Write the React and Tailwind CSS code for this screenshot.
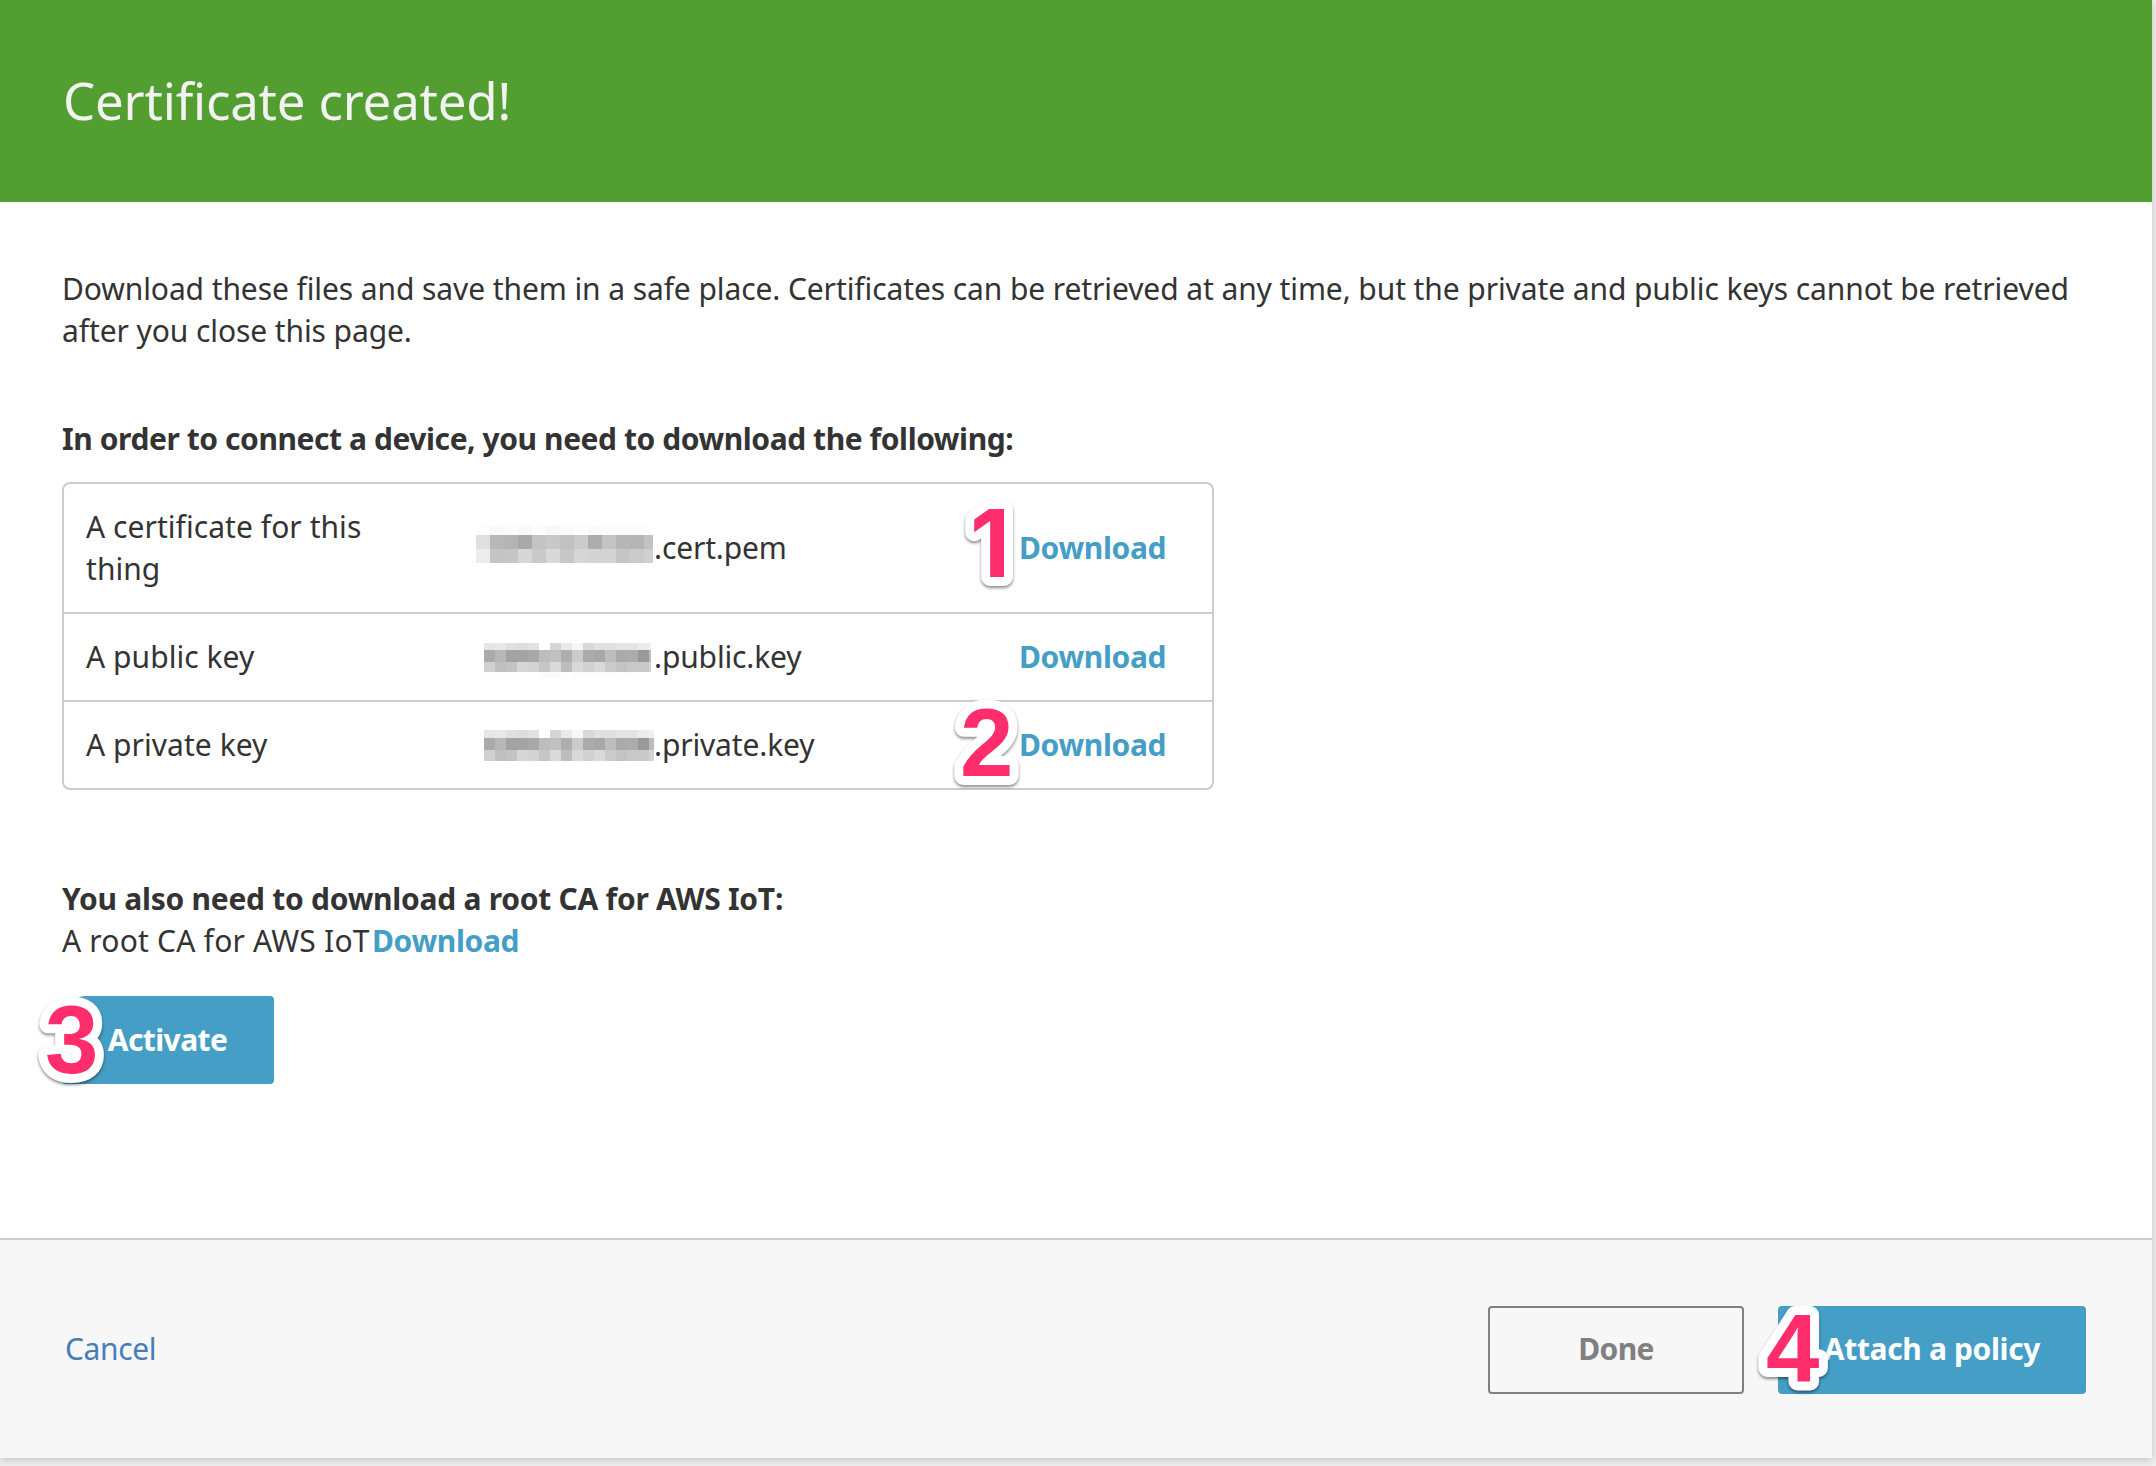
import React from "react";

const FACE = "font-['Noto_Sans',sans-serif]";

function Mosaic({ rows, cell, className }) {
  return (
    <span className={`block shrink-0 overflow-hidden ${className}`}>
      {rows.map(([height, shades], i) => (
        <span key={i} className="flex" style={{ height }}>
          {shades.split(" ").map((s, j) => (
            <span key={j} className="block shrink-0" style={{ width: cell, backgroundColor: `#${s}${s}${s}` }} />
          ))}
        </span>
      ))}
    </span>
  );
}

const certRows = [
  [10, "fd f9 fc f9 fd f8 fb fd fa fb fb fc fe"],
  [14, "e0 b8 b4 a9 c4 c8 c1 cb ad c3 b7 b5 c3"],
  [14, "ec c4 c6 d6 ca d9 c7 d6 d3 d3 c5 cb d0"],
];

const keyShades = [
  "e6 e8 e0 dd e1 ff d5 e9 f6 d8 e0 e0 e5 e4 ec f0",
  "aa b7 a2 a4 a8 bd c1 ae cb ab a7 bd aa ac 99 bd",
  "d0 bf c3 d6 d3 c7 da bd d9 d1 d9 cb c3 c8 ca d3",
  "fd fd fd ff ff fc fa ff fc fc fc fc fd fc ff ff",
];
const publicRows = [[7, keyShades[0]], [12, keyShades[1]], [10, keyShades[2]], [7, keyShades[3]]];
const privateRows = [[8, keyShades[0]], [12, keyShades[1]], [11, keyShades[2]]];

function Marker({ digit, className, family = "Liberation Sans", size = 96 }) {
  return (
    <svg
      className={`pointer-events-none absolute h-[110px] w-[90px] overflow-visible [filter:drop-shadow(0_2px_1.5px_rgba(0,0,0,0.45))] ${className}`}
      viewBox="0 0 90 110"
    >
      <text
        x="20"
        y="89"
        fontFamily={`${family}, sans-serif`}
        fontWeight="700"
        fontSize={size}
        fill="#ff2d6c"
        stroke="#fff"
        strokeWidth="18"
        strokeLinejoin="round"
        paintOrder="stroke"
      >
        {digit}
      </text>
    </svg>
  );
}

function DownloadLink() {
  return <a className="font-bold tracking-[-0.35px] text-[#459ec5]">Download</a>;
}

function Row({ label, mosaic, ext, last, children }) {
  return (
    <div className={`relative flex items-center py-[22px] ${last ? "" : "border-b-2 border-[#ccc]"}`}>
      <div className="w-[412px] pr-[110px] pl-[22px] tracking-[0.05px]">{label}</div>
      <div className="flex w-[543px] items-center">
        <div className="flex h-[42px] w-[178px] shrink-0">{mosaic}</div>
        <span className="tracking-[-0.15px]">{ext}</span>
      </div>
      <DownloadLink />
      {children}
    </div>
  );
}

export default function App() {
  return (
    <div className={`h-[1466px] w-[2156px] overflow-hidden bg-[#f0f0f0] ${FACE} text-[30px] leading-[42px] text-[#333]`}>
      <div className="flex h-[1458px] w-[2152px] flex-col bg-white shadow-[0_2px_8px_rgba(0,0,0,0.2)]">
        <header className="flex h-[202px] items-center bg-[#529e30] pb-0.5 pl-[63px]">
          <h1 className="text-[51px] leading-[70px] tracking-[-0.2px] text-[#f2f2f2]">Certificate created!</h1>
        </header>

        <main className="h-[1036px] px-[62px] pt-[66px]">
          <p className="tracking-[-0.095px] whitespace-nowrap">
            Download these files and save them in a safe place. Certificates can be retrieved at any time, but the private and public keys cannot be retrieved
            <br />
            after you close this page.
          </p>

          <h2 className="mt-[66px] font-bold tracking-[-0.43px]">In order to connect a device, you need to download the following:</h2>
          <div className="mt-[22px] w-[1152px] rounded-lg border-2 border-[#ccc]">
            <Row
              label="A certificate for this thing"
              ext=".cert.pem"
              mosaic={<Mosaic rows={certRows} cell={14} className="-mt-[2px] w-[177px]" />}
            >
              <Marker digit="1" className="top-[4px] left-[886px]" family="Inter" size={93} />
            </Row>
            <Row
              label="A public key"
              ext=".public.key"
              mosaic={<Mosaic rows={publicRows} cell={11} className="mt-[7px] ml-2 w-[167px]" />}
            />
            <Row
              label="A private key"
              ext=".private.key"
              last
              mosaic={<Mosaic rows={privateRows} cell={11} className="mt-[6px] ml-2 w-[170px]" />}
            >
              <Marker digit="2" className="-top-[15px] left-[876px]" />
            </Row>
          </div>

          <h2 className="mt-[88px] font-bold tracking-[-0.26px]">You also need to download a root CA for AWS IoT:</h2>
          <p className="flex">
            <span className="w-[310px] tracking-[0.2px] whitespace-nowrap">A root CA for AWS IoT</span>
            <DownloadLink />
          </p>

          <div className="relative mt-[34px] w-[212px]">
            <button className="h-[88px] w-full rounded rounded-tl-[24px] bg-[#459ec5] pr-px pb-px font-bold tracking-[-0.6px] text-white">Activate</button>
            <Marker digit="3" className="-top-[12px] -left-[37px]" />
          </div>
        </main>

        <footer className="flex h-[220px] items-center border-t-2 border-[#ccc] bg-[#f7f7f7] pt-0.5 pr-[66px] pl-[65px]">
          <a className="pb-0.5 tracking-[-0.4px] text-[#467db9]">Cancel</a>
          <button className="ml-auto h-[88px] w-[256px] rounded border-2 border-[#808080] pb-0.5 font-bold tracking-[-0.6px] text-[#808080]">Done</button>
          <div className="relative ml-[34px] w-[308px]">
            <button className="h-[88px] w-full rounded bg-[#459ec5] pb-0.5 font-bold tracking-[-0.35px] text-white">Attach a policy</button>
            <Marker digit="4" className="-top-[13px] -left-[32px]" />
          </div>
        </footer>
      </div>
    </div>
  );
}
